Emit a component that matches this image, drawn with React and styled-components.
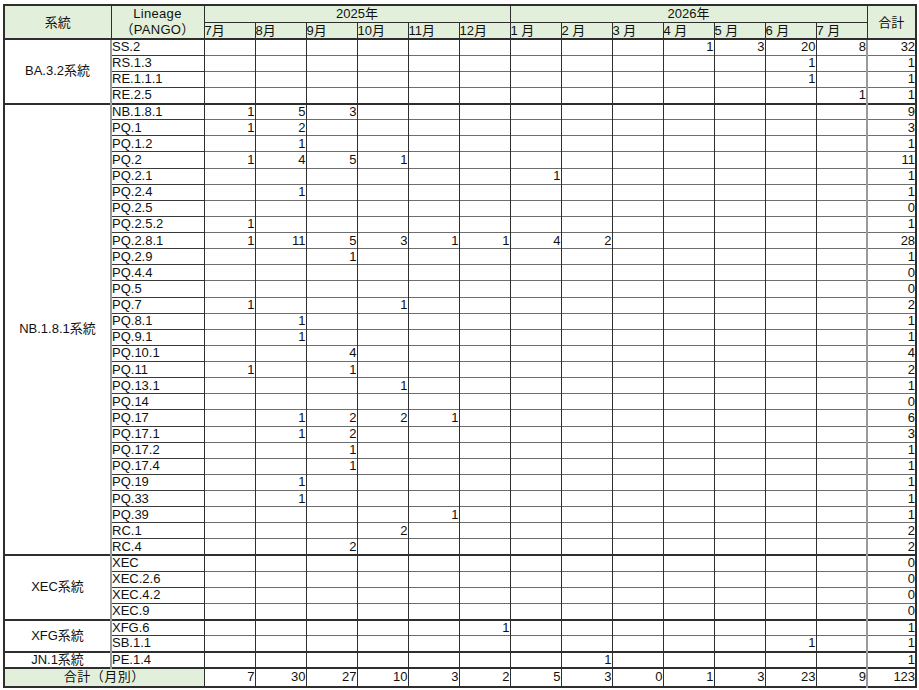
import React from 'react';
import styled, { createGlobalStyle } from 'styled-components';

const GlobalStyle = createGlobalStyle`
  html, body {
    margin: 0;
    padding: 0;
    background: #fff;
  }
  body {
    font-family: "Liberation Sans", "Noto Sans CJK JP", sans-serif;
    color: #111;
  }
`;

const months2025 = ['7月', '8月', '9月', '10月', '11月', '12月'];
const months2026 = ['1 月', '2 月', '3 月', '4 月', '5 月', '6 月', '7 月'];

// values keyed by month column index (0 = 2025/7 ... 12 = 2026/7)
const groups = [
  {
    name: 'BA.3.2系統',
    rows: [
      ['SS.2', { 9: 1, 10: 3, 11: 20, 12: 8 }],
      ['RS.1.3', { 11: 1 }],
      ['RE.1.1.1', { 11: 1 }],
      ['RE.2.5', { 12: 1 }],
    ],
  },
  {
    name: 'NB.1.8.1系統',
    rows: [
      ['NB.1.8.1', { 0: 1, 1: 5, 2: 3 }],
      ['PQ.1', { 0: 1, 1: 2 }],
      ['PQ.1.2', { 1: 1 }],
      ['PQ.2', { 0: 1, 1: 4, 2: 5, 3: 1 }],
      ['PQ.2.1', { 6: 1 }],
      ['PQ.2.4', { 1: 1 }],
      ['PQ.2.5', {}],
      ['PQ.2.5.2', { 0: 1 }],
      ['PQ.2.8.1', { 0: 1, 1: 11, 2: 5, 3: 3, 4: 1, 5: 1, 6: 4, 7: 2 }],
      ['PQ.2.9', { 2: 1 }],
      ['PQ.4.4', {}],
      ['PQ.5', {}],
      ['PQ.7', { 0: 1, 3: 1 }],
      ['PQ.8.1', { 1: 1 }],
      ['PQ.9.1', { 1: 1 }],
      ['PQ.10.1', { 2: 4 }],
      ['PQ.11', { 0: 1, 2: 1 }],
      ['PQ.13.1', { 3: 1 }],
      ['PQ.14', {}],
      ['PQ.17', { 1: 1, 2: 2, 3: 2, 4: 1 }],
      ['PQ.17.1', { 1: 1, 2: 2 }],
      ['PQ.17.2', { 2: 1 }],
      ['PQ.17.4', { 2: 1 }],
      ['PQ.19', { 1: 1 }],
      ['PQ.33', { 1: 1 }],
      ['PQ.39', { 4: 1 }],
      ['RC.1', { 3: 2 }],
      ['RC.4', { 2: 2 }],
    ],
  },
  {
    name: 'XEC系統',
    rows: [
      ['XEC', {}],
      ['XEC.2.6', {}],
      ['XEC.4.2', {}],
      ['XEC.9', {}],
    ],
  },
  {
    name: 'XFG系統',
    rows: [
      ['XFG.6', { 5: 1 }],
      ['SB.1.1', { 11: 1 }],
    ],
  },
  {
    name: 'JN.1系統',
    rows: [['PE.1.4', { 7: 1 }]],
  },
];

const MONTHS = 13;
const DARK = '#2e2e2e';
const THIN = '#6e6e6e';
const SOFT = '#9a9a9a';
const GREEN = '#e2efda';

const Page = styled.div`
  padding: 4px 0 0 3px;
`;

const Table = styled.table`
  border-collapse: collapse;
  table-layout: fixed;
  width: 912px;
  border: 2px solid ${DARK};
  font-size: 13px;
  line-height: 14px;
`;

const Row = styled.tr`
  height: ${(p) => p.$h}px;
`;

const Cell = styled.td`
  padding: 0;
  white-space: nowrap;
  overflow: hidden;
  vertical-align: middle;
  border-left: 1px solid ${DARK};
  border-right: 1px solid ${DARK};
  border-top: ${(p) => (p.$groupStart ? `2px solid ${DARK}` : `1px solid ${THIN}`)};
  border-bottom: none;
`;

const HeadCell = styled.th`
  background: ${GREEN};
  font-weight: normal;
  padding: 0 ${(p) => (p.$align === 'left' ? '0' : '1px')};
  white-space: nowrap;
  text-align: ${(p) => p.$align || 'center'};
  border: 1px solid ${DARK};
  line-height: 15px;
`;

const LineageHead = styled(HeadCell)`
  line-height: 16px;
  letter-spacing: 0.3px;
`;

const GroupCell = styled(Cell)`
  text-align: center;
  border-right: none;
  border-top: 2px solid ${DARK};
`;

const LineageCell = styled(Cell)`
  text-align: left;
  border-left: 2px solid ${SOFT};
  border-top-color: ${(p) => (p.$groupStart ? DARK : '#3a3a3a')};
`;

const NumCell = styled(Cell)`
  text-align: right;
`;

const TotalCell = styled(NumCell)`
  border-left: 2px solid ${SOFT};
`;

const FooterLabel = styled.td`
  background: ${GREEN};
  text-align: center;
  border: 1px solid ${DARK};
  border-top: 2px solid ${DARK};
  letter-spacing: 0.5px;
`;

const FooterNum = styled(NumCell)`
  border-top: 2px solid ${DARK};
`;

const FooterSum = styled(FooterNum)`
  border-left: 2px solid ${SOFT};
`;

const sumRow = (vals) => Object.values(vals).reduce((a, b) => a + b, 0);

export default function App() {
  const colTotals = Array.from({ length: MONTHS }, (_, i) =>
    groups.reduce(
      (acc, g) => acc + g.rows.reduce((s, [, v]) => s + (v[i] || 0), 0),
      0
    )
  );
  const grand = colTotals.reduce((a, b) => a + b, 0);

  return (
    <Page>
      <GlobalStyle />
      <Table>
        <colgroup>
          <col style={{ width: 107 }} />
          <col style={{ width: 93 }} />
          {Array.from({ length: MONTHS }, (_, i) => (
            <col key={i} style={{ width: 51 }} />
          ))}
          <col style={{ width: 49 }} />
        </colgroup>
        <thead>
          <Row $h={17}>
            <HeadCell rowSpan={2}>系統</HeadCell>
            <LineageHead rowSpan={2}>
              Lineage
              <br />
              （PANGO）
            </LineageHead>
            <HeadCell colSpan={6}>2025年</HeadCell>
            <HeadCell colSpan={7}>2026年</HeadCell>
            <HeadCell rowSpan={2}>合計</HeadCell>
          </Row>
          <Row $h={17}>
            {[...months2025, ...months2026].map((m) => (
              <HeadCell key={m} $align="left">
                {m}
              </HeadCell>
            ))}
          </Row>
        </thead>
        <tbody>
          {groups.map((g) =>
            g.rows.map(([name, vals], ri) => (
              <Row key={name} $h={16.13}>
                {ri === 0 && <GroupCell rowSpan={g.rows.length}>{g.name}</GroupCell>}
                <LineageCell $groupStart={ri === 0}>{name}</LineageCell>
                {Array.from({ length: MONTHS }, (_, i) => (
                  <NumCell key={i} $groupStart={ri === 0}>
                    {vals[i] ?? ''}
                  </NumCell>
                ))}
                <TotalCell $groupStart={ri === 0}>{sumRow(vals)}</TotalCell>
              </Row>
            ))
          )}
          <Row $h={19}>
            <FooterLabel colSpan={2}>合計（月別）</FooterLabel>
            {colTotals.map((t, i) => (
              <FooterNum key={i}>{t}</FooterNum>
            ))}
            <FooterSum>{grand}</FooterSum>
          </Row>
        </tbody>
      </Table>
    </Page>
  );
}
